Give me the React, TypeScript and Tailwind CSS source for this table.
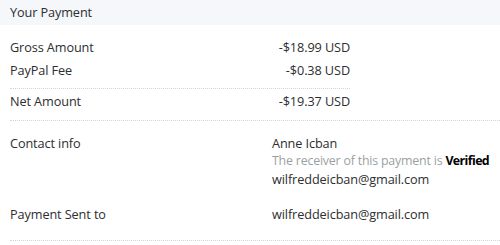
import React from "react";

export default function App() {
  const font = { fontFamily: '"Open Sans", "Noto Sans", sans-serif' };
  return (
    <div className="w-[500px] h-[245px] bg-white text-[#2c2e2f] text-[12.7px] tracking-[-0.1px] overflow-hidden whitespace-nowrap" style={font}>
      <div className="h-[25px] bg-[#f5f7fa] pl-[10px] leading-[25px]">Your Payment</div>
      <div className="pl-[10px]">
        <div className="w-[340px] pt-[11px]">
          <div className="flex justify-between leading-[23px]">
            <span>Gross Amount</span>
            <span>-$18.99 USD</span>
          </div>
          <div className="flex justify-between leading-[23px]">
            <span>PayPal Fee</span>
            <span>-$0.38 USD</span>
          </div>
          <div className="mt-[6px] border-t border-dotted border-[#d4d4d4]" />
          <div className="flex justify-between leading-[23px] mt-[1px]">
            <span>Net Amount</span>
            <span>-$19.37 USD</span>
          </div>
        </div>
        <div className="mt-[7px] border-t border-dotted border-[#d4d4d4]" />
        <div className="flex pt-[13px] leading-[18px]">
          <div className="w-[262px] shrink-0">Contact info</div>
          <div className="flex flex-col">
            <span>Anne Icban</span>
            <span className="text-[#9b9fa3] text-[12.4px] tracking-[-0.2px]">
              The receiver of this payment is{" "}
              <span className="font-bold text-[#000] tracking-[-0.6px]">Verified</span>
            </span>
            <span>wilfreddeicban@gmail.com</span>
          </div>
        </div>
        <div className="flex pt-[17px] leading-[18px]">
          <div className="w-[262px] shrink-0">Payment Sent to</div>
          <div>wilfreddeicban@gmail.com</div>
        </div>
        <div className="mt-[17px] border-t border-dotted border-[#d4d4d4]" />
      </div>
    </div>
  );
}
